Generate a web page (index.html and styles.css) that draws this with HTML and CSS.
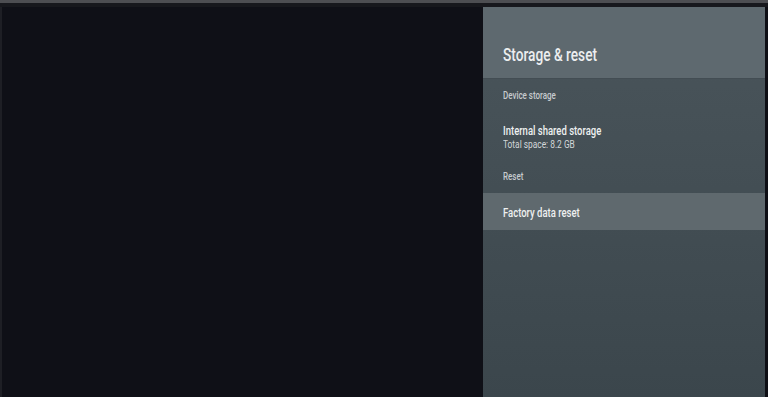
FILE: index.html
```html
<!DOCTYPE html>
<html lang="en">
<head>
    <meta charset="UTF-8">
    <meta name="viewport" content="width=device-width, initial-scale=1.0">
    <title>Storage &amp; reset</title>
    <link rel="stylesheet" href="styles.css">
</head>
<body>
    <div class="pantalla">
        <div class="bisel"></div>
        <div class="contenido">
            <div class="fondo"></div>
            <div class="panel">
                <div class="cabecera">
                    <span class="texto titulo">Storage &amp; reset</span>
                </div>
                <div class="cuerpo">
                    <div class="seccion"><span class="texto">Device storage</span></div>
                    <div class="opcion">
                        <span class="texto principal">Internal shared storage</span>
                        <span class="texto secundario">Total space: 8.2 GB</span>
                    </div>
                    <div class="seccion reset"><span class="texto">Reset</span></div>
                    <div class="opcion activa">
                        <span class="texto principal">Factory data reset</span>
                    </div>
                </div>
            </div>
        </div>
    </div>
</body>
</html>
```

FILE: styles.css
```css
body {
    margin: 0;
    background-color: #0e0f15;
    font-family: Roboto, 'Noto Sans', sans-serif;
    overflow: hidden;
}

.pantalla {
    display: flex;
    flex-direction: column;
    height: 397px;
    width: 768px;
}

.bisel {
    height: 3px;
    background-color: #4d4e52;
    border-bottom: 4px solid #17181d;
}

.contenido {
    flex: 1;
    display: flex;
    padding-right: 3px;
    border-left: 2px solid #1e1f25;
}

.fondo {
    width: 481px;
    background-color: #0f1017;
}

.panel {
    flex: 1;
    display: flex;
    flex-direction: column;
    background: linear-gradient(#4a555b, #3b464c);
}

.texto {
    display: inline-block;
    transform: scaleX(0.76);
    transform-origin: left center;
    white-space: nowrap;
}

.cabecera {
    height: 72px;
    padding: 37px 0 0 20px;
    box-sizing: border-box;
    background-color: #5e696f;
    border-bottom: 1px solid #434d53;
}

.titulo {
    font-size: 18px;
    font-weight: 500;
    color: #eceeef;
    line-height: 22px;
}

.cuerpo {
    display: flex;
    flex-direction: column;
}

.seccion {
    padding: 11px 20px 0;
    height: 19px;
    font-size: 10.5px;
    font-weight: 500;
    color: #c6cbce;
    line-height: 12px;
}

.reset {
    padding-top: 10px;
    height: 22px;
}

.opcion {
    display: flex;
    flex-direction: column;
    padding: 14px 20px 0;
    height: 52px;
    box-sizing: border-box;
}

.principal {
    font-size: 12.5px;
    font-weight: 500;
    color: #eef0f1;
    line-height: 15px;
}

.secundario {
    font-size: 11px;
    color: #d3d7d9;
    line-height: 14px;
}

.activa {
    height: 37px;
    padding-top: 12px;
    background-color: #5f696e;
}
```
